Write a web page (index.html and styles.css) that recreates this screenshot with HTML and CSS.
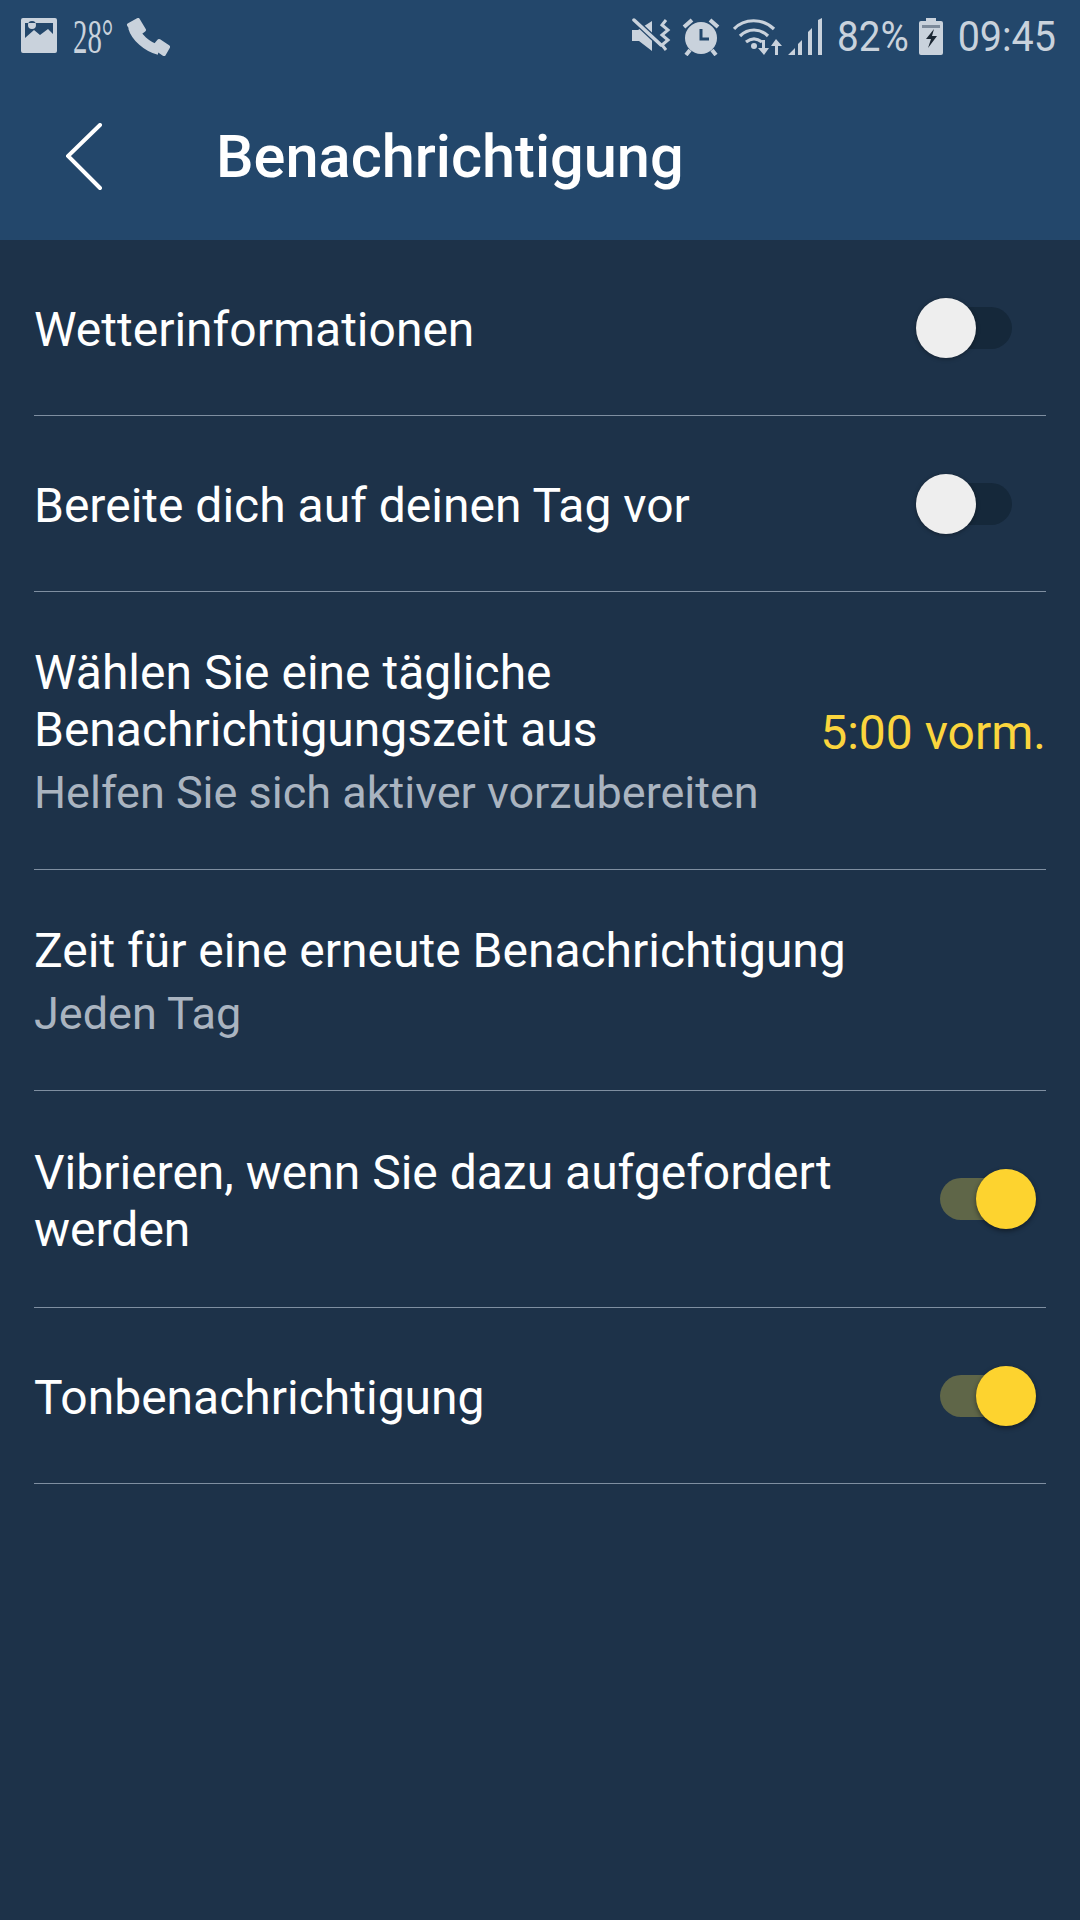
FILE: index.html
```html
<!DOCTYPE html>
<html lang="de">

<head>
    <meta charset="UTF-8">
    <meta name="viewport" content="width=device-width, initial-scale=1.0">
    <title>Benachrichtigung</title>
    <link rel="stylesheet" href="styles.css">
</head>

<body>
    <div id="header">
        <div class="status-bar">
            <div class="status-left">
                <svg class="ic-image" width="36" height="35" viewBox="0 0 36 35">
                    <path fill="#c9d2dc" fill-rule="evenodd" d="M2 0h32a2 2 0 0 1 2 2v31a2 2 0 0 1-2 2H2a2 2 0 0 1-2-2V2a2 2 0 0 1 2-2zM4 5v15l9-8 6 5 8-6 5 5V5zM11 11a4 4 0 1 0 0-8 4 4 0 0 0 0 8z"/>
                </svg>
                <span class="temp">28°</span>
                <svg class="ic-phone" width="44" height="38" viewBox="0 0 44 38">
                    <g fill="#c9d2dc" stroke="#c9d2dc" stroke-width="4" stroke-linejoin="round">
                        <path d="M3 7l9-5 6 10-8 6zM28 29l5-6 9 6-4 7z"/>
                    </g>
                    <path fill="none" stroke="#c9d2dc" stroke-width="10" d="M7 9c3 10 14 20 26 23"/>
                </svg>
            </div>
            <div class="status-right">
                <svg width="40" height="36" viewBox="0 0 40 36">
                    <path fill="#c9d2dc" d="M0 12h6L20 3v30L7 23H0z"/>
                    <path stroke="#23476b" stroke-width="6" d="M0 0l30 28"/>
                    <path stroke="#c9d2dc" stroke-width="3.5" stroke-linecap="round" d="M2 2l27 25"/>
                    <path fill="none" stroke="#c9d2dc" stroke-width="3" d="M34 2l-4 5 6 5-6 5 6 5-6 5 4 5"/>
                </svg>
                <svg class="ic-alarm" width="38" height="38" viewBox="0 0 38 38">
                    <circle cx="19" cy="20" r="16" fill="#c9d2dc"/>
                    <path fill="none" stroke="#23476b" stroke-width="3" d="M19 11v10h8"/>
                    <path stroke="#c9d2dc" stroke-width="4" d="M2 9l8-7M36 9l-8-7M8 32l-4 5M30 32l4 5"/>
                </svg>
                <svg width="52" height="38" viewBox="0 0 52 38">
                    <g fill="none" stroke="#c9d2dc" stroke-width="3.2">
                        <path d="M1 11C11 0 30 0 41 11"/>
                        <path d="M7 18c8-8 20-8 28 0"/>
                        <path d="M13 24c5-4 11-4 16 0"/>
                    </g>
                    <circle cx="21" cy="28" r="3" fill="#c9d2dc"/>
                    <path fill="#c9d2dc" d="M29 22h3v8h4l-5 7-6-7h4zM42 37v-9h-4l5-7 6 7h-4v9z"/>
                </svg>
                <svg class="ic-signal" width="36" height="37" viewBox="0 0 36 37">
                    <path fill="#c9d2dc" d="M0 37l7-7v7zM10 26l4-4v15h-4zM20 14l4-4v27h-4zM30 2l4-2v37h-4z"/>
                </svg>
                <span class="status-text pct">82%</span>
                <svg class="ic-battery" width="24" height="37" viewBox="0 0 24 37">
                    <path fill="#c9d2dc" d="M7 0h10v3h5a2 2 0 0 1 2 2v30a2 2 0 0 1-2 2H2a2 2 0 0 1-2-2V5a2 2 0 0 1 2-2h5z"/>
                    <path fill="#7d8b9b" d="M3 7h18v3H3z"/>
                    <path fill="#1b2733" d="M15 11l-8 10h5l-3 9 9-12h-5z"/>
                </svg>
                <span class="status-text clock">09:45</span>
            </div>
        </div>
        <div class="title-bar">
            <svg class="back" width="38" height="68" viewBox="0 0 38 68">
                <path fill="none" stroke="#fff" stroke-width="4" stroke-linecap="round" d="M34 2L2 33l32 32"/>
            </svg>
            <h1>Benachrichtigung</h1>
        </div>
    </div>

    <ul id="list">
        <li class="row h-176">
            <div class="label">Wetterinformationen</div>
            <div class="switch off"><i></i></div>
        </li>
        <li class="row h-176">
            <div class="label">Bereite dich auf deinen Tag vor</div>
            <div class="switch off"><i></i></div>
        </li>
        <li class="row h-278">
            <div class="label">Wählen Sie eine tägliche<br>Benachrichtigungszeit aus
                <div class="sub">Helfen Sie sich aktiver vorzubereiten</div>
            </div>
            <div class="value">5:00 vorm.</div>
        </li>
        <li class="row h-221">
            <div class="label">Zeit für eine erneute Benachrichtigung
                <div class="sub">Jeden Tag</div>
            </div>
        </li>
        <li class="row h-217">
            <div class="label">Vibrieren, wenn Sie dazu aufgefordert<br>werden</div>
            <div class="switch on"><i></i></div>
        </li>
        <li class="row h-176">
            <div class="label">Tonbenachrichtigung</div>
            <div class="switch on"><i></i></div>
        </li>
    </ul>
</body>

</html>
```

FILE: styles.css
```css
* {
    margin: 0;
    padding: 0;
    box-sizing: border-box;
}

ul {
    list-style: none;
}

body {
    width: 1080px;
    height: 1920px;
    overflow: hidden;
    background: #1d3249;
    color: #fff;
    font-family: Roboto, "Noto Sans", sans-serif;
}

#header {
    height: 240px;
    background: #23476b;
}

.status-bar {
    height: 74px;
    padding: 18px 24px 0 21px;
    display: flex;
    justify-content: space-between;
    align-items: flex-start;
    color: #c9d2dc;
}

.status-left {
    display: flex;
    align-items: flex-start;
}

.ic-image {
    margin-right: 16px;
}

.temp {
    font-family: "Liberation Serif", serif;
    font-size: 48px;
    line-height: 38px;
    width: 40px;
    margin-right: 13px;
    transform: scaleX(.6);
    transform-origin: left top;
}

.status-right {
    display: flex;
    align-items: flex-start;
    gap: 10px;
}

.ic-alarm {
    margin-right: 3px;
}

.ic-signal {
    margin-left: -7px;
    margin-right: 3px;
}

.status-text {
    font-size: 42px;
    line-height: 38px;
}

.pct {
    width: 72px;
    transform: scaleX(.92);
    transform-origin: left center;
}

.clock {
    width: 100px;
    transform: scaleX(.94);
    transform-origin: right center;
    display: flex;
    justify-content: flex-end;
}

.ic-battery {
    margin-right: 3px;
}

.title-bar {
    display: flex;
    align-items: center;
    height: 166px;
    padding-left: 66px;
}

.back {
    margin-right: 112px;
}

h1 {
    font-size: 59.5px;
    font-weight: 500;
    line-height: 64px;
}

#list {
    padding: 0 34px;
}

.row {
    display: flex;
    justify-content: space-between;
    align-items: center;
    border-bottom: 1px solid #7f8fa1;
    font-size: 48px;
    line-height: 57px;
}

.h-176 { height: 176px; }
.h-278 { height: 278px; }
.h-221 { height: 221px; }
.h-217 { height: 217px; }

.label,
.value {
    padding-top: 4px;
}

.sub {
    font-size: 45px;
    line-height: 64px;
    padding-top: 3px;
    margin-bottom: -3px;
    color: #aab4c0;
}

.value {
    font-size: 48px;
    color: #fbd53d;
    white-space: nowrap;
}

.switch {
    position: relative;
    width: 72px;
    height: 42px;
    border-radius: 21px;
}

.switch i {
    position: absolute;
    top: -9px;
    width: 60px;
    height: 60px;
    border-radius: 50%;
}

.switch.off {
    margin-right: 34px;
    background: #15283a;
}

.switch.off i {
    left: -24px;
    background: #eeeeee;
    box-shadow: 0 1px 4px rgba(0, 0, 0, .35);
}

.switch.on {
    margin-right: 34px;
    background: #5f6648;
}

.switch.on i {
    left: 36px;
    background: #fdd32f;
    box-shadow: 0 2px 5px rgba(0, 0, 0, .45);
}
```
